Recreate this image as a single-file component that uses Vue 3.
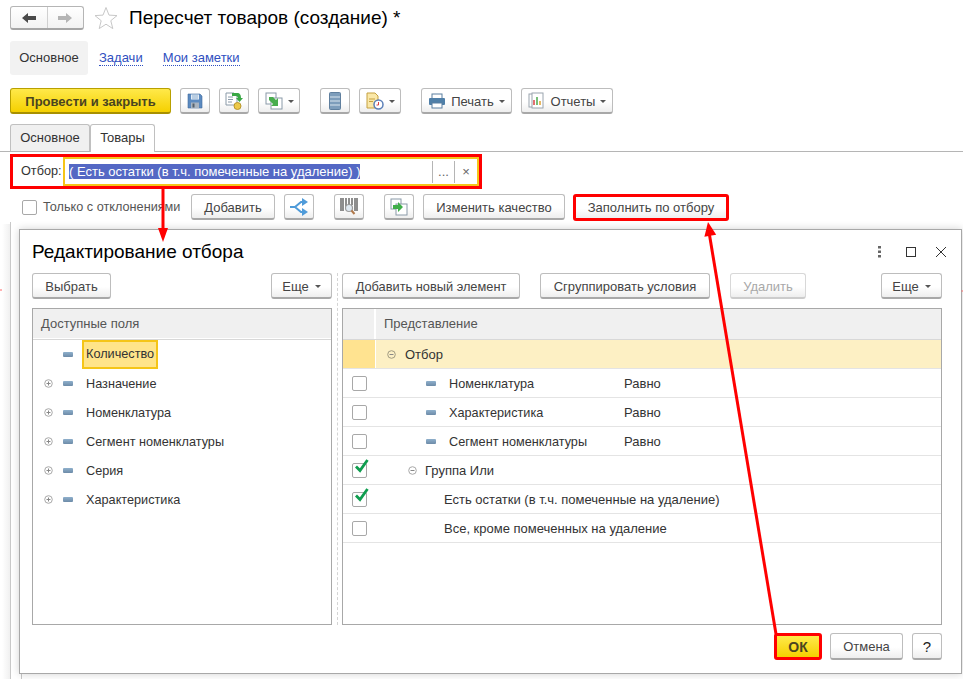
<script setup>
const leftRows = [
  { label: "Количество", active: true },
  { label: "Назначение", plus: true },
  { label: "Номенклатура", plus: true },
  { label: "Сегмент номенклатуры", plus: true },
  { label: "Серия", plus: true },
  { label: "Характеристика", plus: true },
];

const rightRows = [
  { label: "Номенклатура", field: true, cond: "Равно" },
  { label: "Характеристика", field: true, cond: "Равно" },
  { label: "Сегмент номенклатуры", field: true, cond: "Равно" },
  { label: "Группа Или", group: true, checked: true },
  { label: "Есть остатки (в т.ч. помеченные на удаление)", leaf: true, checked: true },
  { label: "Все, кроме помеченных на удаление", leaf: true },
];
</script>

<template>
  <div class="page">
    <header class="title-row">
      <div class="nav-group">
        <button class="nav-btn">
          <svg width="14" height="12" viewBox="0 0 14 12"><path d="M0 6 6 1v3h8v4H6v3z" fill="#4a4a4a" /></svg>
        </button>
        <button class="nav-btn">
          <svg width="14" height="12" viewBox="0 0 14 12"><path d="M14 6 8 1v3H0v4h8v3z" fill="#b4b4b4" /></svg>
        </button>
      </div>
      <svg class="star" width="24" height="24" viewBox="0 0 24 24">
        <path d="M12 1.500l3 7.600 8 .5-6.200 5.100 2 7.900L12 18.200 5.200 22.600l2-7.900L1 9.600l8-.5z" fill="#fff" stroke="#c8c8c8" />
      </svg>
      <h1 class="title">Пересчет товаров (создание) *</h1>
    </header>

    <nav class="sub-nav">
      <span class="sub-active">Основное</span>
      <a class="sub-link">Задачи</a>
      <a class="sub-link">Мои заметки</a>
    </nav>

    <div class="toolbar">
      <button class="btn btn-yellow post-btn">Провести и закрыть</button>
      <button class="btn icon-btn">
        <svg width="16" height="16" viewBox="0 0 16 16">
          <path d="M1 1h12l2 2v12H1z" fill="#5b8ac0" stroke="#3f6a9c" stroke-width=".6" />
          <rect x="4" y="1.500" width="8" height="5" fill="#e3ebf4" />
          <path d="M5 3h6M5 5h6" stroke="#8fb0d0" />
          <rect x="4" y="9.500" width="8" height="5.500" fill="#a9b4c0" />
          <rect x="5.500" y="10.500" width="2" height="4" fill="#54606c" />
        </svg>
      </button>
      <button class="btn icon-btn">
        <svg width="18" height="18" viewBox="0 0 18 18">
          <path d="M1 1h8l3 3v9H1z" fill="#fff" stroke="#8a9aa8" />
          <path d="M3 5h5M3 7.500h5M3 10h4" stroke="#8a9aa8" />
          <ellipse cx="12.500" cy="14" rx="3.500" ry="3.500" fill="#edc948" stroke="#b8962c" />
          <path d="M7 1h5c3 0 4 2 4 5h2l-3.500 4L11 6h2c0-1-1-2-2-2H7z" fill="#39a845" />
        </svg>
      </button>
      <button class="btn icon-btn menu-btn">
        <svg width="18" height="18" viewBox="0 0 18 18">
          <rect x="1" y="1" width="10" height="11" fill="#fff" stroke="#8a9aa8" />
          <rect x="6" y="6" width="11" height="11" fill="#fff" stroke="#8a9aa8" />
          <path d="M4 5h4l3 3 2-2v8H6l2-2-4-4z" fill="#48ad4e" />
        </svg>
        <i class="caret"></i>
      </button>
      <button class="btn icon-btn gap-left">
        <svg width="12" height="18" viewBox="0 0 12 18">
          <rect x=".5" y=".5" width="11" height="17" rx="1" fill="#7d9dbb" stroke="#5f7f9e" />
          <path d="M1 5h10M1 9h10M1 13h10" stroke="#dbe6ef" />
        </svg>
      </button>
      <button class="btn icon-btn menu-btn">
        <svg width="18" height="18" viewBox="0 0 18 18">
          <path d="M1 1h8l3 3v12H1z" fill="#fae8a8" stroke="#c4a040" />
          <path d="M3 7h6M3 9.500h4" stroke="#c4a040" />
          <circle cx="12.500" cy="12.500" r="4.500" fill="#fff" stroke="#5a7fb8" stroke-width="1.500" />
          <path d="M12.500 10v3h-2" stroke="#d84040" fill="none" />
        </svg>
        <i class="caret"></i>
      </button>
      <button class="btn text-menu-btn gap-left">
        <svg width="18" height="16" viewBox="0 0 18 16">
          <rect x="4" y="1" width="10" height="5" fill="#fff" stroke="#5a7fa0" />
          <rect x="1" y="5" width="16" height="7" rx="1" fill="#4f7fa8" />
          <rect x="4" y="10" width="10" height="5" fill="#fff" stroke="#5a7fa0" />
        </svg>
        Печать
        <i class="caret"></i>
      </button>
      <button class="btn text-menu-btn report-btn">
        <svg width="18" height="18" viewBox="0 0 18 18">
          <rect x="1" y="2" width="9" height="13" fill="#fff" stroke="#9aa4ae" />
          <rect x="4" y="1" width="11" height="15" fill="#fff" stroke="#9aa4ae" />
          <path d="M6 13V8" stroke="#d84040" stroke-width="1.500" />
          <path d="M9 13V5" stroke="#4aa84a" stroke-width="1.500" />
          <path d="M12 13V9" stroke="#e0a030" stroke-width="1.500" />
        </svg>
        Отчеты
        <i class="caret"></i>
      </button>
    </div>

    <div class="tabs">
      <span class="tab">Основное</span>
      <span class="tab tab-active">Товары</span>
    </div>

    <div class="filter-frame">
      <span class="filter-label">Отбор:</span>
      <div class="filter-input">
        <span class="filter-value"><span class="selected">( Есть остатки (в т.ч. помеченные на удаление) )</span></span>
        <span class="filter-action">...</span>
        <span class="filter-action filter-clear">×</span>
      </div>
    </div>

    <div class="actions">
      <label class="only-diff"><span class="checkbox"></span>Только с отклонениями</label>
      <button class="btn add-btn">Добавить</button>
      <button class="btn icon-btn">
        <svg width="20" height="18" viewBox="0 0 20 18">
          <path d="M1 9h5L12 4h3M6 9l6 5h3" fill="none" stroke="#4f9bd9" stroke-width="2" />
          <path d="M13 0l6 4-6 4zM13 10l6 4-6 4z" fill="#4f9bd9" />
        </svg>
      </button>
      <button class="btn icon-btn gap-mid">
        <svg width="18" height="20" viewBox="0 0 18 20">
          <path d="M1 1v13M3 1v13M6 1v9M9 1v7M12 1v7M15 1v13M17 1v13" stroke="#444" stroke-width="1.200" />
          <circle cx="9" cy="11" r="3.500" fill="#dfe8f0" stroke="#9a9a9a" stroke-width="1.200" />
          <path d="M11.500 13.500l3 3.500" stroke="#b0784a" stroke-width="2" />
        </svg>
      </button>
      <button class="btn icon-btn gap-mid">
        <svg width="18" height="18" viewBox="0 0 18 18">
          <rect x="1" y="1" width="10" height="10" fill="#fff" stroke="#8a9aa8" />
          <rect x="6" y="6" width="11" height="11" fill="#fff" stroke="#8a9aa8" />
          <path d="M3 7h5V4l5 5-5 5v-3H3z" fill="#3fae49" />
        </svg>
      </button>
      <button class="btn quality-btn">Изменить качество</button>
      <button class="btn fill-btn">Заполнить по отбору</button>
    </div>

    <div class="backdrop-band"></div>
    <div class="backdrop-line"></div>
    <div class="backdrop-foot"></div>

    <section class="dialog">
      <div class="dialog-head">
        <h2 class="dialog-title">Редактирование отбора</h2>
        <div class="window-tools">
          <svg width="4" height="12" viewBox="0 0 4 12"><path d="M0 0h3v2.400H0zM0 4.500h3v2.400H0zM0 9h3v2.400H0z" fill="#666" /></svg>
          <span class="maximize"></span>
          <svg class="close-icon" width="12" height="12" viewBox="0 0 12 12"><path d="M1 1l10 10M11 1 1 11" stroke="#333" stroke-width="1" /></svg>
        </div>
      </div>

      <div class="panes">
        <div class="pane pane-left">
          <div class="pane-bar">
            <button class="btn choose-btn">Выбрать</button>
            <button class="btn more-btn">Еще <i class="caret"></i></button>
          </div>
          <div class="table">
            <div class="table-head head-left">Доступные поля</div>
            <div v-for="row in leftRows" :key="row.label" class="left-row">
              <span class="tree-toggle"><svg v-if="row.plus" width="9" height="9" viewBox="0 0 9 9"><circle cx="4.500" cy="4.500" r="3.800" fill="#fff" stroke="#a8a8a8" /><path d="M2.500 4.500h4M4.500 2.500v4" stroke="#888" /></svg></span>
              <i class="field-icon"></i>
              <span class="left-label" :class="{ 'left-label-active': row.active }">{{ row.label }}</span>
            </div>
          </div>
        </div>

        <div class="pane pane-right">
          <div class="pane-bar">
            <button class="btn new-btn">Добавить новый элемент</button>
            <button class="btn group-btn">Сгруппировать условия</button>
            <button class="btn delete-btn" disabled>Удалить</button>
            <button class="btn more-btn push-right">Еще <i class="caret"></i></button>
          </div>
          <div class="table">
            <div class="right-head">
              <span class="check-cell"></span>
              <span class="head-title">Представление</span>
            </div>
            <div class="right-row">
              <span class="check-cell root-check"></span>
              <span class="row-main root-main">
                <svg width="9" height="9" viewBox="0 0 9 9"><circle cx="4.500" cy="4.500" r="3.800" fill="none" stroke="#a09a80" /><path d="M2.500 4.500h4" stroke="#888" /></svg>
                Отбор
              </span>
            </div>
            <div v-for="row in rightRows" :key="row.label" class="right-row">
              <span class="check-cell">
                <span class="checkbox">
                  <svg v-if="row.checked" class="tick" width="16" height="14" viewBox="0 0 16 14"><path d="M2 7.500 6 11.500 13.500 1" fill="none" stroke="#0f9d4f" stroke-width="2.800" /></svg>
                </span>
              </span>
              <span class="row-main" :class="{ 'row-field': row.field, 'row-group': row.group, 'row-leaf': row.leaf }">
                <svg v-if="row.group" class="group-toggle" width="9" height="9" viewBox="0 0 9 9"><circle cx="4.500" cy="4.500" r="3.800" fill="none" stroke="#a8a8a8" /><path d="M2.500 4.500h4" stroke="#888" /></svg>
                <i v-if="row.field" class="field-icon"></i>
                <span class="row-label">{{ row.label }}</span>
                <span v-if="row.cond" class="row-cond">{{ row.cond }}</span>
              </span>
            </div>
          </div>
        </div>
      </div>

      <div class="dialog-foot">
        <button class="btn btn-yellow ok-btn">ОК</button>
        <button class="btn cancel-btn">Отмена</button>
        <button class="btn help-btn">?</button>
      </div>
    </section>

    <!-- annotation arrows drawn over the screenshot -->
    <svg class="arrows" width="963" height="679" viewBox="0 0 963 679">
      <path d="M163 189V230" stroke="#f00" stroke-width="3" />
      <path d="M158 228h10l-5 14z" fill="#f00" />
      <path d="M776 634 709 232" stroke="#f00" stroke-width="3" />
      <path d="M708 222l-3.600 14.800 11.800-2z" fill="#f00" />
      <path d="M0 290h2M961.500 291h2" stroke="#f66" stroke-width="1" />
    </svg>
  </div>
</template>

<style>
html,
body {
  margin: 0;
  background: #fff;
}
</style>

<style scoped>
.page {
  position: relative;
  width: 963px;
  height: 679px;
  overflow: hidden;
  background: #fff;
  font-family: "Liberation Sans", Arial, sans-serif;
  font-size: 13px;
  color: #333;
  box-sizing: border-box;
  padding: 6px 0 0 10px;
}

.title-row {
  display: flex;
  align-items: center;
  height: 24px;
}

.nav-group {
  display: flex;
  width: 74px;
  height: 24px;
  box-sizing: border-box;
  border: 1px solid #b5b5b5;
  border-bottom: 2px solid #a5a5a5;
  border-radius: 3px;
  background: linear-gradient(#fff, #f2f2f2);
}

.nav-btn {
  flex: 1;
  border: none;
  background: none;
  padding: 0;
  display: flex;
  align-items: center;
  justify-content: center;
}

.nav-btn + .nav-btn {
  border-left: 1px solid #d0d0d0;
}

.star {
  margin-left: 10px;
}

.title {
  margin: 0 0 0 11px;
  font-size: 19px;
  font-weight: 400;
  color: #000;
}

.sub-nav {
  display: flex;
  align-items: center;
  margin-top: 11px;
  height: 34px;
}

.sub-active {
  width: 78px;
  height: 34px;
  line-height: 34px;
  text-align: center;
  background: #f2f2f2;
  border-radius: 3px;
}

.sub-link {
  margin-left: 11px;
  margin-right: 9px;
  color: #2f4fc0;
  border-bottom: 1px dotted #2f4fc0;
  line-height: 14px;
}

.toolbar {
  display: flex;
  margin-top: 13px;
  gap: 9px;
}

.btn {
  height: 26px;
  box-sizing: border-box;
  padding: 1px 0 0;
  border: 1px solid #bdbdbd;
  border-bottom: 2px solid #a8a8a8;
  border-radius: 3px;
  background: linear-gradient(#fff 55%, #eeeeee);
  font: inherit;
  color: #444;
  display: flex;
  align-items: center;
  justify-content: center;
}

.btn-yellow {
  background: linear-gradient(#ffe94a, #f5d000);
  border-color: #b8a000;
  border-bottom-color: #a89000;
  color: #4a4420;
}

.post-btn {
  width: 161px;
  font-weight: 700;
}

.icon-btn {
  width: 30px;
}

.menu-btn {
  width: 42px;
  gap: 5px;
}

.gap-left {
  margin-left: 11px;
}

.gap-mid {
  margin-left: 20px;
}

.text-menu-btn {
  width: 91px;
  gap: 5px;
}

.report-btn {
  width: 92px;
}

.caret {
  display: inline-block;
  width: 0;
  height: 0;
  border-left: 3px solid transparent;
  border-right: 3px solid transparent;
  border-top: 3px solid #555;
}

.tabs {
  display: flex;
  margin-top: 10px;
  height: 27px;
  margin-left: -10px;
  padding-left: 10px;
  border-bottom: 1px solid #b5b5b5;
}

.tab {
  width: 80px;
  height: 27px;
  box-sizing: border-box;
  line-height: 26px;
  text-align: center;
  background: #f0f0f0;
  border: 1px solid #c0c0c0;
  border-bottom: none;
  border-radius: 3px 3px 0 0;
}

.tab-active {
  width: 65px;
  height: 28px;
  background: #fff;
  position: relative;
}

.filter-frame {
  display: flex;
  align-items: stretch;
  width: 472px;
  height: 35px;
  box-sizing: border-box;
  margin-top: 2px;
  border: 3px solid #f00;
}

.filter-label {
  width: 50px;
  padding-left: 8px;
  box-sizing: border-box;
  font-size: 12.700px;
  line-height: 29px;
}

.filter-input {
  flex: 1;
  display: flex;
  align-items: center;
  border: 2px solid #f5c518;
  padding-left: 4px;
}

.filter-value {
  flex: 1;
}

.selected {
  background: #5468c4;
  color: #fff;
}

.filter-action {
  width: 21px;
  height: 22px;
  line-height: 22px;
  text-align: center;
  border-left: 1px solid #b5b5b5;
  color: #666;
}

.filter-clear {
  width: 22px;
}

.actions {
  display: flex;
  align-items: flex-start;
  margin-top: 5px;
  height: 27px;
}

.only-diff {
  display: flex;
  align-items: center;
  width: 181px;
  height: 26px;
  padding-left: 12px;
  box-sizing: border-box;
  color: #555;
  font-size: 12.700px;
  white-space: nowrap;
}

.only-diff .checkbox {
  margin-right: 6px;
  flex-shrink: 0;
}

.checkbox {
  position: relative;
  display: inline-block;
  width: 15px;
  height: 15px;
  box-sizing: border-box;
  border: 1px solid #a8a8a8;
  border-radius: 2px;
  background: #fff;
}

.tick {
  position: absolute;
  left: 1px;
  top: -5px;
}

.add-btn {
  width: 84px;
  margin-right: 9px;
}

.quality-btn {
  width: 142px;
  margin-left: 9px;
}

.fill-btn {
  width: 156px;
  height: 27px;
  margin-left: 8px;
  border: 3px solid #f00;
  padding: 0;
}

.backdrop-band {
  position: absolute;
  left: 0;
  top: 224px;
  bottom: 0;
  width: 10px;
  background: linear-gradient(90deg, #fff 20%, #f0f0f0);
}

.backdrop-line {
  position: absolute;
  left: 10px;
  top: 222px;
  bottom: 0;
  border-left: 1px solid #c8c8c8;
}

.backdrop-foot {
  position: absolute;
  left: 21px;
  top: 673px;
  bottom: 0;
  border-left: 1px solid #c8c8c8;
}

.dialog {
  position: absolute;
  left: 19px;
  top: 229px;
  width: 943px;
  height: 445px;
  box-sizing: border-box;
  display: flex;
  flex-direction: column;
  background: #fff;
  border: 1px solid #a8a8a8;
  box-shadow: 0 0 8px rgba(0, 0, 0, 0.18);
  padding: 0 19px 0 12px;
}

.dialog-head {
  display: flex;
  align-items: center;
  justify-content: space-between;
  height: 43px;
}

.dialog-title {
  margin: 0;
  font-size: 19px;
  font-weight: 400;
  color: #000;
}

.window-tools {
  display: flex;
  align-items: center;
  margin-right: -5px;
}

.maximize {
  width: 10px;
  height: 10px;
  box-sizing: border-box;
  border: 1px solid #333;
  margin-left: 24px;
}

.close-icon {
  margin-left: 19px;
}

.panes {
  display: flex;
  height: 352px;
}

.pane {
  display: flex;
  flex-direction: column;
}

.pane-left {
  width: 300px;
}

.pane-right {
  width: 600px;
  margin-left: 5px;
  padding-left: 4px;
  border-left: 1px dashed #d4d4d4;
}

.pane-bar {
  display: flex;
  height: 35px;
  flex-shrink: 0;
  gap: 20px;
}

.choose-btn {
  width: 79px;
}

.more-btn {
  width: 61px;
  gap: 6px;
  margin-left: auto;
}

.new-btn {
  width: 178px;
  font-size: 12.800px;
}

.group-btn {
  width: 170px;
}

.delete-btn {
  width: 76px;
  color: #a8a8a8;
  border-color: #d8d8d8;
  border-bottom-color: #ccc;
}

.table {
  flex: 1;
  border: 1px solid #a8a8a8;
  box-sizing: border-box;
}

.table-head {
  height: 30px;
  line-height: 30px;
  background: #f0f0f0;
  border-bottom: 1px solid #d8d8d8;
  box-shadow: inset 0 -1px 0 #fff;
}

.head-left {
  padding-left: 8px;
  color: #555;
}

.left-row {
  display: flex;
  align-items: center;
  height: 29px;
}

.tree-toggle {
  width: 19px;
  margin-left: 11px;
  display: flex;
}

.field-icon {
  display: inline-block;
  width: 10px;
  height: 5px;
  border-radius: 1px;
  background: linear-gradient(#8fb0cc, #6d8ba8);
  flex-shrink: 0;
}

.left-label {
  margin-left: 13px;
  color: #333;
  font-size: 12.700px;
}

.left-label-active {
  margin-left: 9px;
  padding: 0 2px;
  height: 29px;
  line-height: 25px;
  box-sizing: border-box;
  background: #ffe48a;
  border: 2px solid #f5c518;
}

.right-head {
  display: flex;
  height: 30px;
  background: #f0f0f0;
  border-bottom: 1px solid #d8d8d8;
  line-height: 30px;
}

.right-head .check-cell {
  border-right: 2px solid #fff;
}

.head-title {
  padding-left: 8px;
  color: #555;
}

.right-row {
  display: flex;
  height: 29px;
  box-shadow: inset 0 -1px 0 #e4e4e4;
}

.check-cell {
  width: 33px;
  flex-shrink: 0;
  display: flex;
  align-items: center;
  padding-left: 9px;
  box-sizing: border-box;
}

.root-check {
  background: #ffe390;
  border-right: 1px solid #fff;
  height: 28px;
}

.row-main {
  flex: 1;
  display: flex;
  align-items: center;
}

.root-main {
  gap: 9px;
  padding-left: 11px;
  height: 28px;
  background: #fdf0c4;
}

.row-field {
  padding-left: 50px;
}

.row-field .row-label {
  margin-left: 13px;
  width: 175px;
  font-size: 12.700px;
}

.row-group {
  padding-left: 32px;
}

.group-toggle {
  margin-right: 8px;
}

.row-leaf {
  padding-left: 68px;
}

.dialog-foot {
  display: flex;
  justify-content: flex-end;
  gap: 8px;
  margin-top: 8px;
}

.ok-btn {
  width: 48px;
  height: 27px;
  border: 3px solid #f00;
  padding: 0;
  font-weight: 700;
  font-size: 14px;
}

.cancel-btn {
  width: 73px;
  height: 27px;
}

.help-btn {
  width: 30px;
  height: 27px;
  margin-left: 1px;
  color: #222;
  font-size: 15px;
}

.arrows {
  position: absolute;
  left: 0;
  top: 0;
  pointer-events: none;
}
</style>
